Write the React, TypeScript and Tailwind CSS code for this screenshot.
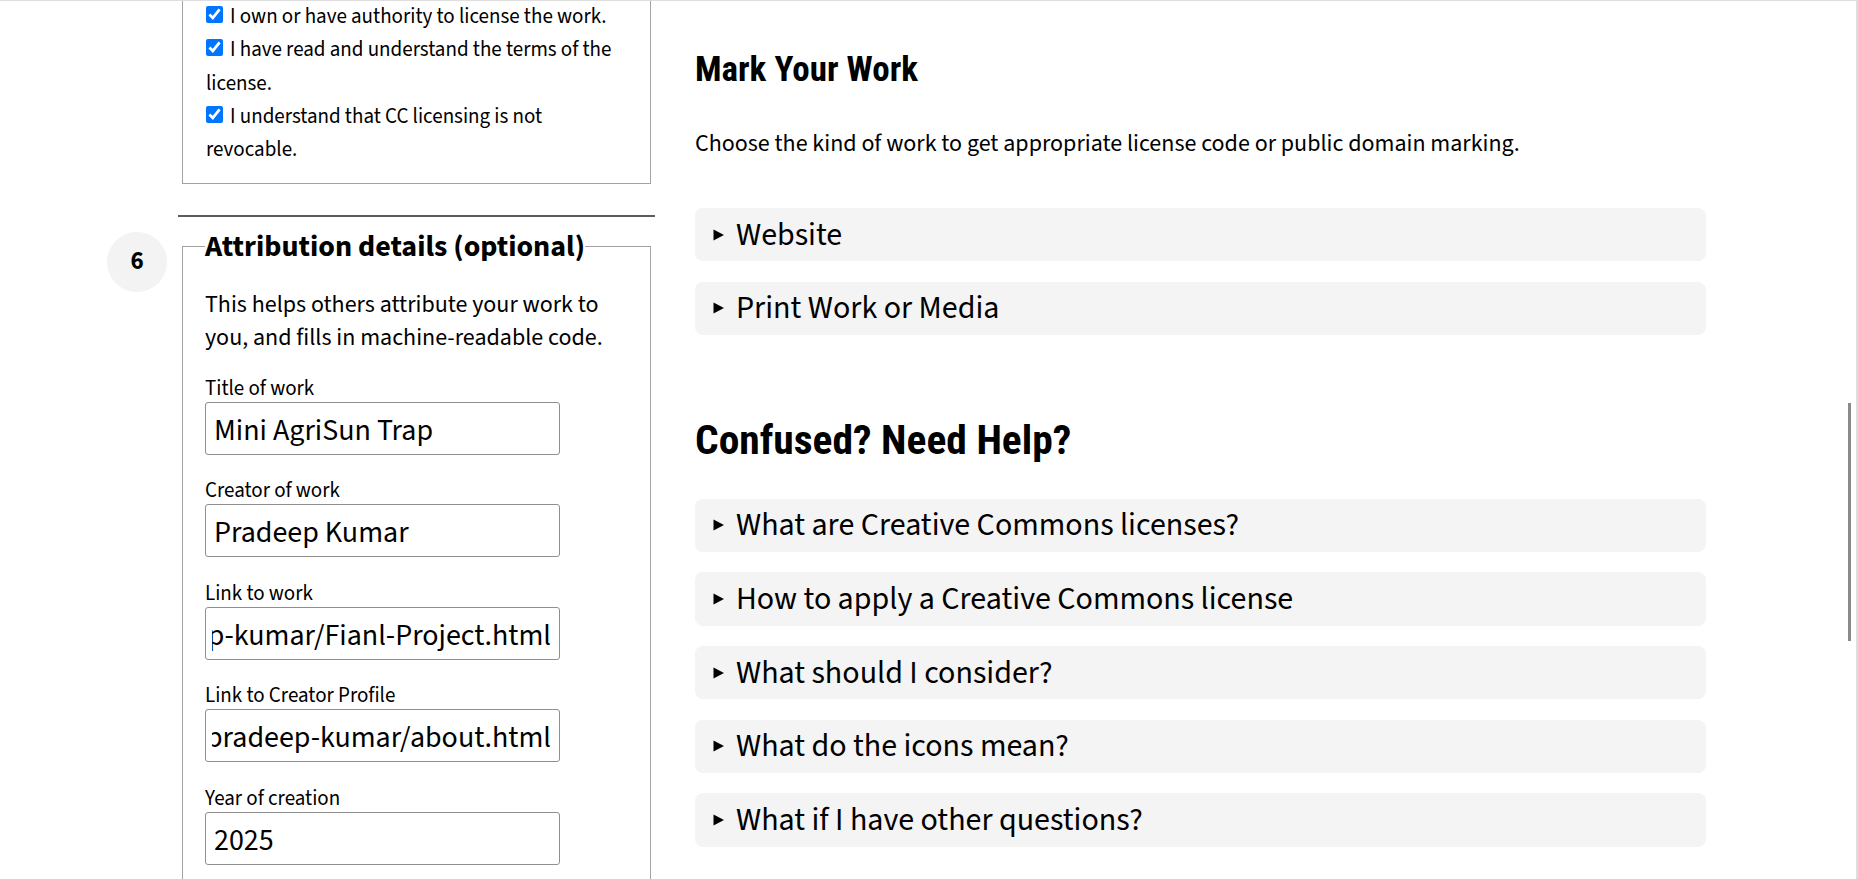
import React from "react";

function CheckLine({ children }: { children: React.ReactNode }) {
  return (
    <div className="whitespace-nowrap">
      <input
        type="checkbox"
        defaultChecked
        readOnly
        className="w-[17px] h-[17px] m-0 mr-[7px] align-baseline accent-[#0075ff]"
      />
      {children}
    </div>
  );
}

function Field({ label, value, end }: { label: string; value: string; end?: boolean }) {
  return (
    <div className="mb-[22.5px]">
      <div className="text-[21px] leading-[27px]">{label}</div>
      <div
        className={
          end
            ? "w-[355px] h-[53px] border border-[#8f8f8f] rounded-[3px] pl-[6px] pr-[8px] pt-[5px] flex items-center bg-white"
            : "w-[355px] h-[53px] border border-[#8f8f8f] rounded-[3px] pl-[8px] pr-[8px] pt-[5px] flex items-center bg-white"
        }
      >
        <div
          className={
            end
              ? "w-full h-[40px] overflow-hidden whitespace-nowrap flex items-center justify-end text-[30px] leading-[40px]"
              : "w-full h-[40px] whitespace-nowrap flex items-center justify-start text-[30px] leading-[40px]"
          }
        >
          <span className="shrink-0">{value}</span>
        </div>
      </div>
    </div>
  );
}

function Summary({ children }: { children: React.ReactNode }) {
  return (
    <div className="h-[53.4px] rounded-[8px] bg-[#f4f4f4] flex items-center pl-[18px] text-[32px] leading-[40px]">
      <svg width="12" height="12" viewBox="0 0 12 12" className="mr-[11px] shrink-0">
        <polygon points="0.5,0.5 11,6 0.5,11.5" fill="#000" />
      </svg>
      <span>{children}</span>
    </div>
  );
}

export default function App() {
  return (
    <div className="relative w-[1858px] h-[879px] overflow-hidden bg-white border-t border-r-2 border-[#dedede] text-black font-['Source_Sans_3','Source_Sans_Pro','Lato',sans-serif]">
      <div className="flex pl-[107px]">
        <div className="w-[548px] shrink-0">
          <div className="ml-[75px] w-[469px] -mt-[1px] border-x border-b border-[#a3a3a3] px-[23px] pb-[16.5px] text-[21px] leading-[33.3px]">
            <CheckLine>I own or have authority to license the work.</CheckLine>
            <CheckLine>
              I have read and understand the terms of the
              <br />
              license.
            </CheckLine>
            <CheckLine>
              I understand that CC licensing is not
              <br />
              revocable.
            </CheckLine>
          </div>
          <div className="ml-[71px] w-[477px] h-[2px] bg-[#5c5c5c] mt-[31px]" />
          <div className="flex mt-[15px]">
            <div className="w-[60px] h-[60px] shrink-0 rounded-full bg-[#f3f3f3] flex items-center justify-center text-[25px] font-bold leading-none">
              6
            </div>
            <fieldset className="ml-[15px] w-[469px] min-w-0 border border-[#a3a3a3] px-[22px] -mt-[3px]">
              <legend className="text-[30px] font-bold leading-[36px] p-0">Attribution details (optional)</legend>
              <p className="mt-[23px] text-[24px] leading-[33.3px] whitespace-nowrap">
                This helps others attribute your work to
                <br />
                you, and fills in machine-readable code.
              </p>
              <div className="mt-[20px]">
                <Field label="Title of work" value="Mini AgriSun Trap" />
                <Field label="Creator of work" value="Pradeep Kumar" />
                <Field label="Link to work" value="https://pradeep-kumar.github.io/pradeep-kumar/Fianl-Project.html" end />
                <Field label="Link to Creator Profile" value="https://pradeep-kumar.github.io/pradeep-kumar/about.html" end />
                <Field label="Year of creation" value="2025" />
              </div>
            </fieldset>
          </div>
        </div>
        <div className="ml-[40px] w-[1011px] shrink-0">
          <h2 className="mt-[48px] text-[35px] font-bold leading-[42px] font-['Roboto_Condensed','Roboto',sans-serif]">
            Mark Your Work
          </h2>
          <p className="mt-[35.6px] text-[24px] leading-[33px]">
            Choose the kind of work to get appropriate license code or public domain marking.
          </p>
          <div className="mt-[48.4px] flex flex-col gap-[20.4px]">
            <Summary>Website</Summary>
            <Summary>Print Work or Media</Summary>
          </div>
          <h2 className="mt-[79.5px] text-[41.5px] font-bold leading-[50px] font-['Roboto_Condensed','Roboto',sans-serif]">
            Confused? Need Help?
          </h2>
          <div className="mt-[34px] flex flex-col gap-[20.3px]">
            <Summary>What are Creative Commons licenses?</Summary>
            <Summary>How to apply a Creative Commons license</Summary>
            <Summary>What should I consider?</Summary>
            <Summary>What do the icons mean?</Summary>
            <Summary>What if I have other questions?</Summary>
          </div>
        </div>
      </div>
      <div className="absolute right-[5px] top-[402px] w-[3px] h-[238px] bg-[#8a8a8a]" />
    </div>
  );
}
